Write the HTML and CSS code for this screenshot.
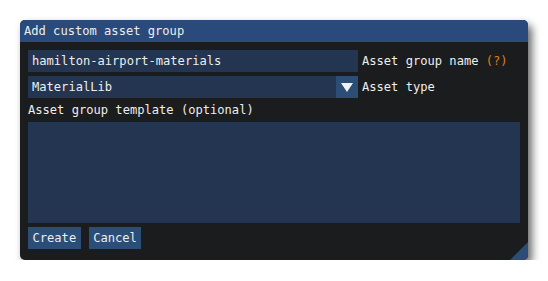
FILE: index.html
```html
<!DOCTYPE html>
<html lang="en">
<head>
    <meta charset="UTF-8">
    <title>Add custom asset group</title>
    <link rel="stylesheet" href="styles.css">
</head>
<body>
    <!-- Dialog window -->
    <div class="dialog">
        <div class="title-bar">Add custom asset group</div>

        <div class="dialog-body">
            <div class="field-row">
                <div class="input">hamilton-airport-materials</div>
                <span class="label">Asset group name <span class="help">(?)</span></span>
            </div>

            <div class="field-row">
                <div class="input combo">
                    <span class="combo-value">MaterialLib</span>
                    <span class="combo-arrow">
                        <svg width="12" height="10" viewBox="0 0 12 10"><polygon points="0,1 12,1 6,10" fill="#f2f2f2"/></svg>
                    </span>
                </div>
                <span class="label">Asset type</span>
            </div>

            <div class="section-label">Asset group template (optional)</div>
            <div class="text-area"></div>

            <div class="button-row">
                <button class="btn">Create</button>
                <button class="btn">Cancel</button>
            </div>
        </div>

        <div class="resize-grip"></div>
    </div>
</body>
</html>
```

FILE: styles.css
```css
/* Page reset */
html, body {
    margin: 0;
    padding: 0;
    background-color: #fff;
}

body {
    padding: 20px 0 0 20px;
    font-family: "DejaVu Sans Mono", "Liberation Mono", monospace;
    font-size: 12.1px;
    color: #eeeeee;
}

/* Main window */
.dialog {
    position: relative;
    width: 508px;
    height: 240px;
    background-color: #1b1c1e;
    border-radius: 5px;
    box-shadow: 4px 5px 8px rgba(0, 0, 0, 0.6);
    overflow: hidden;
}

.title-bar {
    height: 22px;
    line-height: 22px;
    padding: 0 4px;
    background-color: #294a7a;
    white-space: nowrap;
}

.dialog-body {
    display: flex;
    flex-direction: column;
    gap: 4px;
    padding: 8px 8px 0 8px;
}

/* Input rows */
.field-row {
    display: flex;
    align-items: center;
    gap: 4px;
    height: 22px;
}

.input {
    width: 330px;
    height: 22px;
    line-height: 22px;
    padding: 0 4px;
    box-sizing: border-box;
    background-color: #233550;
    white-space: nowrap;
}

.combo {
    display: flex;
    padding-right: 0;
}

.combo-value {
    flex: 1;
}

.combo-arrow {
    display: flex;
    align-items: center;
    justify-content: center;
    width: 22px;
    height: 22px;
    background-color: #2b4d76;
}

.label {
    white-space: nowrap;
}

.help {
    color: #e07b16;
}

.section-label {
    height: 16px;
    line-height: 16px;
}

.text-area {
    height: 101px;
    background-color: #233550;
}

/* Buttons */
.button-row {
    display: flex;
    gap: 8px;
}

.btn {
    height: 22px;
    padding: 0 4.5px;
    border: none;
    background-color: #2b4d76;
    color: #eeeeee;
    font-family: inherit;
    font-size: 12.1px;
}

/* Resize handle in the corner */
.resize-grip {
    position: absolute;
    right: 0;
    bottom: 0;
    width: 0;
    height: 0;
    border-style: solid;
    border-width: 0 0 18px 18px;
    border-color: transparent transparent #2b4d76 transparent;
}
```
